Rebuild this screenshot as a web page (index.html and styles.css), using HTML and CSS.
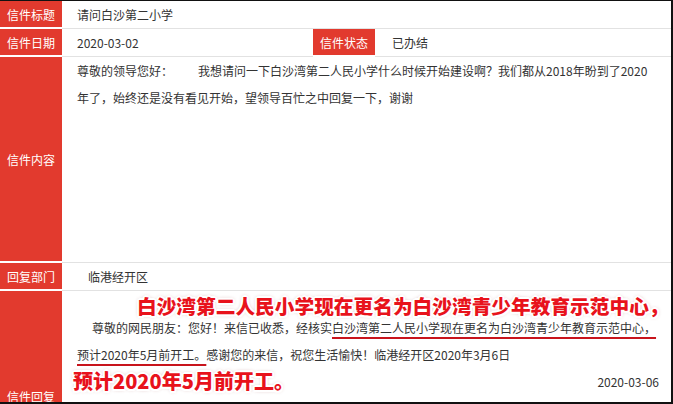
FILE: index.html
```html
<!DOCTYPE html>
<html lang="zh-CN">
<head>
  <meta charset="UTF-8">
  <meta name="viewport" content="width=device-width, initial-scale=1.0">
  <title>信件详情</title>
  <link rel="stylesheet" href="styles.css">
</head>
<body>
  <div class="frame">
    <table class="letter">
      <colgroup>
        <col class="col-label">
        <col class="col-date">
        <col class="col-label">
        <col>
      </colgroup>
      <tr class="row-short">
        <th>信件标题</th>
        <td colspan="3">请问白沙第二小学</td>
      </tr>
      <tr class="row-short">
        <th>信件日期</th>
        <td>2020-03-02</td>
        <th>信件状态</th>
        <td class="status">已办结</td>
      </tr>
      <tr class="row-tall">
        <th>信件内容</th>
        <td colspan="3" class="body-text"><span class="greet">尊敬的领导您好：</span>我想请问一下白沙湾第二人民小学什么时候开始建设啊？我们都从2018年盼到了2020年了，始终还是没有看见开始，望领导百忙之中回复一下，谢谢</td>
      </tr>
      <tr class="row-short">
        <th>回复部门</th>
        <td colspan="3" class="dept">临港经开区</td>
      </tr>
      <tr class="row-reply">
        <th>信件回复</th>
        <td colspan="3" class="reply">
          <p class="reply-text">尊敬的网民朋友：您好！来信已收悉，经核实<span class="mark">白沙湾第二人民小学现在更名为白沙湾青少年教育示范中心，预计2020年5月前开工。</span>感谢您的来信，祝您生活愉快！临港经开区2020年3月6日</p>
          <div class="reply-date">2020-03-06</div>
        </td>
      </tr>
    </table>

    <!-- annotations drawn over the screenshot -->
    <div class="note note-top">白沙湾第二人民小学现在更名为白沙湾青少年教育示范中心，</div>
    <div class="note note-bottom">预计2020年5月前开工。</div>
  </div>
</body>
</html>
```

FILE: styles.css
```css
* { box-sizing: border-box; }
body {
  margin: 0;
  font-family: "Noto Sans CJK SC", "Noto Sans", sans-serif;
  background: #fff;
  color: #333;
}
.frame {
  position: relative;
  width: 673px;
  height: 404px;
  overflow: hidden;
  border-top: 1px solid #111;
  border-right: 2px solid #111;
  border-bottom: 2px solid #111;
}
.letter {
  width: 100%;
  table-layout: fixed;
  border-collapse: separate;
  border-spacing: 0;
}
.col-label { width: 62px; }
.col-date { width: 251px; }
th {
  background: #e23a2e;
  color: #fff;
  font-weight: normal;
  font-size: 12px;
  text-align: center;
  padding: 0;
  border-bottom: 2px solid #fff;
}
td {
  font-size: 12px;
  color: #333;
  padding: 0 12px 0 15px;
  border-bottom: 1px solid #e2e2e2;
}
.row-short { height: 28px; }
.row-tall { height: 206px; }
.row-reply { height: 210px; }
.row-reply th { border-bottom: none; }
.status { padding-left: 17px; }
.dept { padding-left: 26px; }
.body-text {
  vertical-align: top;
  line-height: 27px;
  padding-top: 0;
}
.greet { margin-right: 25px; }
.reply {
  vertical-align: top;
  padding-top: 23px;
}
.reply-text {
  margin: 0;
  line-height: 27px;
  text-indent: 15px;
}
.mark {
  text-decoration: underline;
  text-decoration-color: #c8141c;
  text-decoration-thickness: 2px;
  text-underline-offset: 4px;
}
.reply-date {
  text-align: right;
  line-height: 27px;
}
.note {
  position: absolute;
  line-height: 1;
  font-weight: 900;
  color: #e8121b;
  white-space: nowrap;
  text-shadow:
    2px 0 #fff, -2px 0 #fff, 0 2px #fff, 0 -2px #fff,
    1.5px 1.5px #fff, -1.5px -1.5px #fff, 1.5px -1.5px #fff, -1.5px 1.5px #fff,
    0 0 4px rgba(120, 0, 0, 0.45);
}
.note-top {
  left: 137px;
  top: 295px;
  font-size: 19.7px;
}
.note-bottom {
  left: 73px;
  top: 370px;
  font-size: 20px;
}
```
